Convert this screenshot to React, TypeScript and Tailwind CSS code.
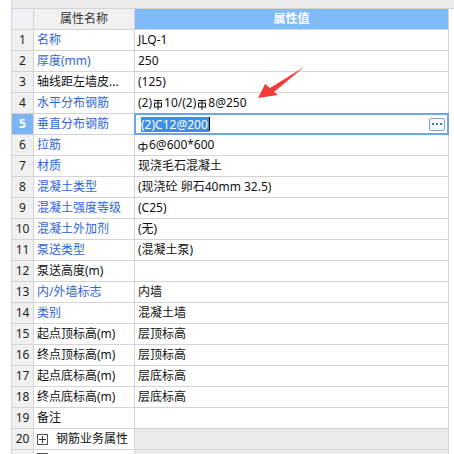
import React from 'react';

type Row = {
  name: string;
  value?: React.ReactNode;
  blue?: boolean;
  group?: boolean;
  hidden?: boolean;
};

// 二级钢筋符号
function GradeTwo() {
  return (
    <svg width="10" height="10" viewBox="0 0 10 10" className="inline-block align-top mt-[3px] mx-[1px]">
      <line x1="1" y1="0.5" x2="9" y2="0.5" stroke="#111" strokeWidth="1" />
      <rect x="1.5" y="3" width="7" height="4" fill="none" stroke="#111" strokeWidth="1" />
      <line x1="5" y1="0.5" x2="5" y2="10" stroke="#111" strokeWidth="1" />
    </svg>
  );
}

// 一级钢筋符号
function GradeOne() {
  return (
    <svg width="10" height="10" viewBox="0 0 10 10" className="inline-block align-top mt-[3px] mr-[1px]">
      <rect x="1" y="2.5" width="8" height="4.5" rx="0.5" fill="none" stroke="#111" strokeWidth="1" />
      <line x1="5" y1="0" x2="5" y2="10" stroke="#111" strokeWidth="1" />
    </svg>
  );
}

const rows: Row[] = [
  { name: '名称', value: 'JLQ-1', blue: true },
  { name: '厚度(mm)', value: '250', blue: true },
  { name: '轴线距左墙皮...', value: '(125)' },
  {
    name: '水平分布钢筋',
    blue: true,
    value: (
      <>
        (2)<GradeTwo />10/(2)<GradeTwo />8@250
      </>
    ),
  },
  { name: '垂直分布钢筋', blue: true },
  {
    name: '拉筋',
    blue: true,
    value: (
      <>
        <GradeOne />6@600*600
      </>
    ),
  },
  { name: '材质', value: '现浇毛石混凝土', blue: true },
  { name: '混凝土类型', value: '(现浇砼 卵石40mm 32.5)', blue: true },
  { name: '混凝土强度等级', value: '(C25)', blue: true },
  { name: '混凝土外加剂', value: '(无)', blue: true },
  { name: '泵送类型', value: '(混凝土泵)', blue: true },
  { name: '泵送高度(m)' },
  { name: '内/外墙标志', value: '内墙', blue: true },
  { name: '类别', value: '混凝土墙', blue: true },
  { name: '起点顶标高(m)', value: '层顶标高' },
  { name: '终点顶标高(m)', value: '层顶标高' },
  { name: '起点底标高(m)', value: '层底标高' },
  { name: '终点底标高(m)', value: '层底标高' },
  { name: '备注' },
  { name: '钢筋业务属性', group: true },
  // next row is scrolled almost out of view
  { name: '', group: true, hidden: true },
];

function PlusBox() {
  return (
    <span className="inline-flex items-center justify-center w-[11px] h-[11px] border border-[#555] bg-white mr-[8px] shrink-0">
      <svg width="7" height="7" viewBox="0 0 7 7">
        <line x1="0" y1="3.5" x2="7" y2="3.5" stroke="#333" strokeWidth="1" />
        <line x1="3.5" y1="0" x2="3.5" y2="7" stroke="#333" strokeWidth="1" />
      </svg>
    </span>
  );
}

export default function App() {
  return (
    <div className="relative w-[454px] h-[454px] overflow-hidden bg-white font-['Noto_Sans','Noto_Sans_CJK_SC',sans-serif] text-[12px] text-[#111]">
      {/* top title strip, mostly scrolled out */}
      <div className="flex h-[9px]">
        <div className="w-[11px] bg-white" />
        <div className="flex-1 bg-[#ebebeb] border-l border-[#d4d4d4] border-b" />
      </div>

      <div className="flex">
        <div className="w-[11px] shrink-0" />
        <div className="border-l border-[#d4d4d4]">
          {/* header */}
          <div className="grid grid-cols-[22px_101px_314px] h-[21px]">
            <div className="bg-[#eef1f5] border-r border-b border-[#d4d4d4]" />
            <div className="bg-[#f0f0f0] border-r border-b border-[#d4d4d4] flex items-center justify-center text-[#333]">
              属性名称
            </div>
            <div className="bg-[#80bbf9] border-r border-b border-[#d4d4d4] flex items-center justify-center text-white font-semibold">
              属性值
            </div>
          </div>

          {rows.map((row, i) => {
            const selected = i === 4;
            return (
              <div key={i} className="grid grid-cols-[22px_101px_314px] h-[21px]">
                <div
                  className={
                    selected
                      ? 'bg-[#7cb5f2] text-white font-bold border-r border-b border-[#d4d4d4] flex items-center justify-center'
                      : 'bg-[#f0f0f0] text-[#222] border-r border-b border-[#d4d4d4] flex items-center justify-center'
                  }
                >
                  {!row.hidden && i + 1}
                </div>
                <div
                  className={`border-r border-b border-[#d4d4d4] flex pl-[3px] whitespace-nowrap overflow-hidden ${
                    row.hidden ? 'items-start pt-[3px]' : 'items-center'
                  } ${row.blue ? 'text-[#2f65db]' : 'text-[#111]'}`}
                >
                  {row.group && <PlusBox />}
                  {row.name}
                </div>
                {selected ? (
                  <div className="relative -mt-px -ml-px h-[22px] w-[315px] border-2 border-[#6ea6e2] bg-white flex items-center pl-[5px]">
                    <span className="bg-[#3d8ee8] text-white leading-[15px] pr-[1px]">(2)C12@200</span>
                    <span className="w-px h-[14px] bg-black" />
                    <span className="ml-auto mr-[2px] w-[16px] h-[13px] rounded-[2px] border border-[#7aa7d8] bg-[#f4f8fc] flex items-center justify-center gap-[2px]">
                      <span className="w-[2px] h-[2px] bg-[#4a76b0]" />
                      <span className="w-[2px] h-[2px] bg-[#4a76b0]" />
                      <span className="w-[2px] h-[2px] bg-[#4a76b0]" />
                    </span>
                  </div>
                ) : (
                  <div
                    className={`border-r border-b border-[#d4d4d4] flex items-center pl-[3px] whitespace-nowrap ${
                      row.group ? 'bg-[#ebebeb]' : 'bg-white'
                    }`}
                  >
                    {row.value}
                  </div>
                )}
              </div>
            );
          })}
        </div>
      </div>

      {/* red annotation arrow */}
      <svg className="absolute left-0 top-0 pointer-events-none" width="454" height="454">
        <polygon points="258,98 265,84 270,88 304,67 274,92 278,95" fill="#f23c3c" />
      </svg>
    </div>
  );
}
